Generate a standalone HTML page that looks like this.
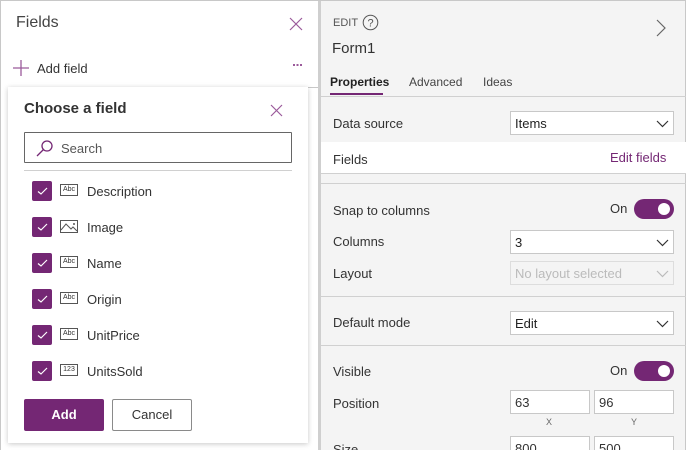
<!DOCTYPE html>
<html><head><style>
*{box-sizing:border-box;margin:0;padding:0}
html,body{width:686px;height:450px;overflow:hidden}
body{font-family:"Liberation Sans",sans-serif;color:#333;position:relative;background:#fff}
.a{position:absolute}
.frame{left:0;top:0;width:686px;height:450px;border:1px solid #c8c8c8;border-bottom:none}
.t{font-size:13px;white-space:nowrap}
.dd{position:absolute;background:#fff;border:1px solid #c8c8c8;height:24px;font-size:13px;padding:4px 0 0 4px;color:#222}
.dd svg{position:absolute;right:4px;top:8px}
.hl{position:absolute;left:321px;width:365px;height:1px;background:#d0d0d0}
.cb{position:absolute;left:32px;width:20px;height:20px;background:#742774;border-radius:2px}
.ic{position:absolute;left:60px;width:18px;height:12px;border:1px solid #555;font-size:7px;line-height:10px;text-align:center;color:#333}
.lbl{position:absolute;left:87px;font-size:13px;color:#333}
.tog{position:absolute;left:634px;width:40px;height:20px;border-radius:10px;background:#742774}
.tog:after{content:"";position:absolute;right:4px;top:4px;width:12px;height:12px;border-radius:6px;background:#fff}
.in{position:absolute;background:#fff;border:1px solid #c8c8c8;height:24px;font-size:13px;padding:4px 0 0 4px;width:80px}
</style></head><body>
<div class="a" style="left:320px;top:0;width:366px;height:450px;background:#f4f4f4"></div>
<div class="a" style="left:318px;top:0;width:3px;height:450px;background:#cfcfcf"></div>
<div class="a frame"></div>

<div class="a" style="left:16px;top:14px;font-size:16px;color:#444">Fields</div>
<svg class="a" style="left:289px;top:17px" width="14" height="14"><path d="M1 1L13 13M13 1L1 13" stroke="#9b5a9b" stroke-width="1.2"/></svg>
<svg class="a" style="left:13px;top:60px" width="16" height="16"><path d="M8 0V16M0 8H16" stroke="#9b5a9b" stroke-width="1.3"/></svg>
<div class="a t" style="left:37px;top:61px;color:#333">Add field</div>
<svg class="a" style="left:293px;top:64px" width="10" height="3"><rect x="0" y="0" width="2" height="2" fill="#9b5a9b"/><rect x="3.5" y="0" width="2" height="2" fill="#9b5a9b"/><rect x="7" y="0" width="2" height="2" fill="#9b5a9b"/></svg>
<div class="a" style="left:304px;top:87px;width:14px;height:1px;background:#c8c8c8"></div>

<div class="a" style="left:8px;top:87px;width:300px;height:356px;background:#fff;box-shadow:0 1px 5px rgba(0,0,0,.22)"></div>
<div class="a" style="left:24px;top:100px;font-size:15px;font-weight:600;color:#333">Choose a field</div>
<svg class="a" style="left:270px;top:104px" width="13" height="13"><path d="M1 1L12 12M12 1L1 12" stroke="#9b5a9b" stroke-width="1.2"/></svg>
<div class="a" style="left:24px;top:132px;width:268px;height:31px;border:1px solid #666;border-radius:1px"></div>
<svg class="a" style="left:36px;top:139px" width="18" height="18"><circle cx="11" cy="7" r="5" fill="none" stroke="#742774" stroke-width="1.3"/><path d="M7.5 10.5L1 17" stroke="#742774" stroke-width="1.3"/></svg>
<div class="a t" style="left:61px;top:141px;color:#555">Search</div>
<div class="a" style="left:24px;top:170px;width:268px;height:1px;background:#d0d0d0"></div>

<div class="cb" style="top:181px"></div><div class="cb" style="top:217px"></div><div class="cb" style="top:253px"></div><div class="cb" style="top:289px"></div><div class="cb" style="top:325px"></div><div class="cb" style="top:361px"></div>
<svg class="a" style="left:32px;top:181px" width="20" height="200"><g fill="none" stroke="#fff" stroke-width="1.2"><path d="M6 10.5L9 13L15 7"/><path d="M6 46.5L9 49L15 43"/><path d="M6 82.5L9 85L15 79"/><path d="M6 118.5L9 121L15 115"/><path d="M6 154.5L9 157L15 151"/><path d="M6 190.5L9 193L15 187"/></g></svg>
<div class="ic" style="top:184px">Abc</div>
<svg class="a" style="left:60px;top:220px" width="19" height="14"><rect x="0.5" y="0.5" width="17" height="12" fill="none" stroke="#555"/><path d="M1 10L6 4L11 9L13 7L17 11" fill="none" stroke="#555"/><circle cx="14" cy="4" r="1" fill="#555"/></svg>
<div class="ic" style="top:256px">Abc</div>
<div class="ic" style="top:292px">Abc</div>
<div class="ic" style="top:328px">Abc</div>
<div class="ic" style="top:364px">123</div>
<div class="lbl" style="top:184px">Description</div>
<div class="lbl" style="top:220px">Image</div>
<div class="lbl" style="top:256px">Name</div>
<div class="lbl" style="top:292px">Origin</div>
<div class="lbl" style="top:328px">UnitPrice</div>
<div class="lbl" style="top:364px">UnitsSold</div>

<div class="a" style="left:24px;top:399px;width:80px;height:32px;background:#742774;border-radius:2px;color:#fff;font-size:13px;font-weight:600;text-align:center;line-height:32px">Add</div>
<div class="a" style="left:112px;top:399px;width:80px;height:32px;border:1px solid #8a8a8a;border-radius:2px;color:#333;font-size:13px;text-align:center;line-height:30px">Cancel</div>

<div class="a" style="left:333px;top:17px;font-size:11px;color:#555">EDIT</div>
<svg class="a" style="left:362px;top:14px" width="17" height="17"><circle cx="8.5" cy="8.5" r="7.3" fill="none" stroke="#555"/><text x="8.5" y="12.5" font-size="11" text-anchor="middle" fill="#555" font-family="Liberation Sans">?</text></svg>
<svg class="a" style="left:656px;top:19px" width="10" height="18"><path d="M1 1L9 9L1 17" fill="none" stroke="#666" stroke-width="1.2"/></svg>
<div class="a" style="left:332px;top:40px;font-size:15px;color:#333">Form1</div>
<div class="a" style="left:330px;top:75px;font-size:12px;font-weight:600;color:#222">Properties</div>
<div class="a" style="left:330px;top:93px;width:53px;height:2px;background:#742774"></div>
<div class="a" style="left:409px;top:75px;font-size:12px;color:#444">Advanced</div>
<div class="a" style="left:483px;top:75px;font-size:12px;color:#444">Ideas</div>
<div class="hl" style="top:96px"></div>

<div class="a t" style="left:333px;top:116px">Data source</div>
<div class="dd" style="left:510px;top:111px;width:164px">Items<svg width="13" height="8"><path d="M1 1L6.5 6.5L12 1" fill="none" stroke="#333" stroke-width="1.2"/></svg></div>
<div class="a" style="left:321px;top:142px;width:365px;height:32px;background:#fff;border-bottom:1px solid #d0d0d0"></div>
<div class="a t" style="left:333px;top:152px">Fields</div>
<div class="a t" style="left:610px;top:150px;color:#742774">Edit fields</div>
<div class="hl" style="top:183px"></div>

<div class="a t" style="left:333px;top:203px">Snap to columns</div>
<div class="a t" style="left:610px;top:201px">On</div>
<div class="tog" style="top:199px"></div>
<div class="a t" style="left:333px;top:234px">Columns</div>
<div class="dd" style="left:510px;top:230px;width:164px">3<svg width="13" height="8"><path d="M1 1L6.5 6.5L12 1" fill="none" stroke="#333" stroke-width="1.2"/></svg></div>
<div class="a t" style="left:333px;top:266px">Layout</div>
<div class="dd" style="left:510px;top:261px;width:164px;background:#f4f4f4;border-color:#ddd;color:#bbb">No layout selected<svg width="13" height="8"><path d="M1 1L6.5 6.5L12 1" fill="none" stroke="#bbb" stroke-width="1.2"/></svg></div>
<div class="hl" style="top:296px"></div>

<div class="a t" style="left:333px;top:315px">Default mode</div>
<div class="dd" style="left:510px;top:311px;width:164px">Edit<svg width="13" height="8"><path d="M1 1L6.5 6.5L12 1" fill="none" stroke="#333" stroke-width="1.2"/></svg></div>
<div class="hl" style="top:345px"></div>

<div class="a t" style="left:333px;top:364px">Visible</div>
<div class="a t" style="left:610px;top:363px">On</div>
<div class="tog" style="top:361px"></div>
<div class="a t" style="left:333px;top:396px">Position</div>
<div class="in" style="left:510px;top:390px">63</div>
<div class="in" style="left:594px;top:390px">96</div>
<div class="a" style="left:546px;top:417px;font-size:9px;color:#666">X</div>
<div class="a" style="left:631px;top:417px;font-size:9px;color:#666">Y</div>
<div class="a t" style="left:333px;top:442px">Size</div>
<div class="in" style="left:510px;top:436px">800</div>
<div class="in" style="left:594px;top:436px">500</div>
</body></html>
